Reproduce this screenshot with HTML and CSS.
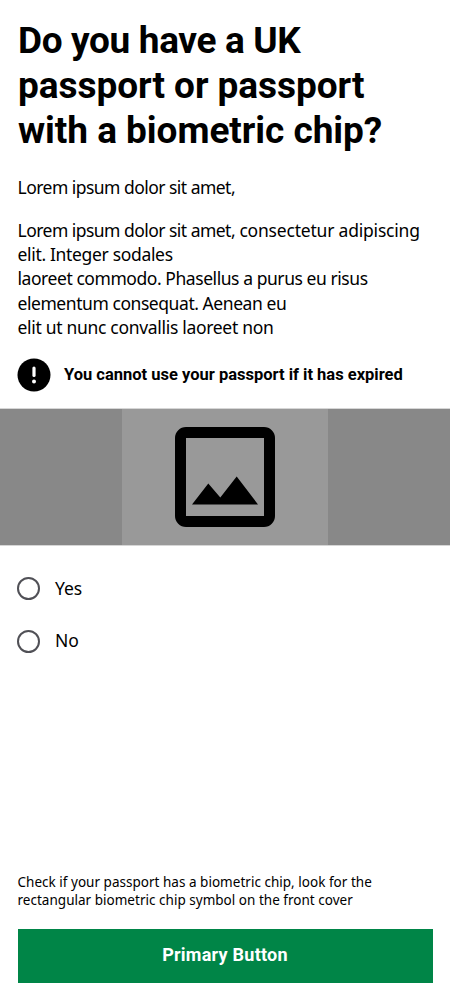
FILE: index.html
```html
<!DOCTYPE html>
<html lang="en">
<head>
<meta charset="utf-8">
<title>Do you have a UK passport?</title>
<link rel="stylesheet" href="styles.css">
</head>
<body>
<main class="screen">
  <h1 class="title"><span class="t1">Do you have a UK</span><br><span class="t2">passport or passport</span><br><span class="t2">with a biometric chip?</span></h1>
  <p class="body"><span class="b1">Lorem ipsum dolor sit amet,</span></p>
  <p class="body"><span class="b1">Lorem ipsum dolor sit amet,</span><span class="b2"> consectetur adipiscing</span><br><span class="b3">elit. Integer sodales</span><br><span class="b4">laoreet commodo. Phasellus a purus eu risus</span><br><span class="b4">elementum consequat. Aenean eu</span><br><span class="b6">elit ut nunc convallis laoreet non</span></p>
  <div class="warning">
    <svg class="warning-icon" viewBox="0 0 34 34"><circle cx="17" cy="17" r="16.5"/><path d="M17 10v7.5" stroke="#fff" stroke-width="3.2" stroke-linecap="round"/><circle cx="17" cy="23.6" r="2" fill="#fff"/></svg>
    <strong class="warning-text">You cannot use your passport if it has expired</strong>
  </div>
  <div class="media">
    <div class="media-inner">
      <svg class="picture" viewBox="0 0 100 100"><path fill-rule="evenodd" d="M11 0H89A11 11 0 0 1 100 11V89A11 11 0 0 1 89 100H11A11 11 0 0 1 0 89V11A11 11 0 0 1 11 0ZM11 11V89H89V11Z"/><path d="M17 77.5 33.3 56.5 45.3 70.5 61.7 49.5 83 77.5Z"/></svg>
    </div>
  </div>
  <div class="options">
    <label class="option"><input class="radio" type="radio" name="passport"><span class="option-text">Yes</span></label>
    <label class="option"><input class="radio" type="radio" name="passport"><span class="option-text">No</span></label>
  </div>
  <footer class="footer">
    <p class="hint">Check if your passport has a biometric chip, look for the<br>rectangular biometric chip symbol on the front cover</p>
    <button class="primary">Primary Button</button>
  </footer>
</main>
</body>
</html>
```
FILE: styles.css
```css
* { box-sizing: border-box; }
body { margin: 0; background: #fff; color: #000; font-family: "Noto Sans", sans-serif; }
.screen { display: flex; flex-direction: column; height: 1000px; padding-top: 18px; overflow: hidden; }
.title { margin: 0 0 22px; padding-left: 18px; font: bold 37px/45px Roboto, sans-serif; white-space: nowrap; }
.t1 { letter-spacing: -0.36px; }
.t2 { letter-spacing: -0.05px; }
.body { margin: 0 0 19px; padding-left: 17.5px; font-size: 17.5px; line-height: 24.15px; white-space: nowrap; }
.b1 { letter-spacing: -0.53px; }
.b2 { letter-spacing: -0.2px; }
.b3 { letter-spacing: -0.33px; }
.b4 { letter-spacing: -0.44px; }
.b6 { letter-spacing: -0.31px; }
.warning { display: flex; align-items: center; gap: 13px; height: 34px; padding-left: 17px; }
.warning-icon { width: 34px; height: 34px; }
.warning-text { font: bold 16.5px/24px Roboto, sans-serif; white-space: nowrap; }
.media { display: flex; justify-content: center; height: 138px; margin-top: 16px; background: #888; border: solid #d6d6d6; border-width: 1px 0; background-clip: padding-box; }
.media-inner { display: flex; justify-content: center; align-items: center; width: 206px; background: #999; }
.picture { width: 100px; height: 100px; }
.options { display: flex; flex-direction: column; gap: 28.5px; padding: 31px 0 0 17px; }
.option { display: flex; align-items: center; gap: 15px; height: 24px; font-size: 17.5px; line-height: 24px; }
.option-text { padding-bottom: 2px; letter-spacing: -0.1px; }
.radio { appearance: none; width: 23px; height: 23px; margin: 0; border: 2px solid #505056; border-radius: 50%; }
.footer { margin-top: auto; padding: 0 17.5px 17.5px; }
.hint { margin: 0 0 20px; font-size: 13.5px; line-height: 18px; letter-spacing: 0.02px; white-space: nowrap; }
.primary { display: block; width: 100%; height: 54px; padding: 0 0 2px; border: 0; background: #008547; color: #fff; font: bold 18px/24px Roboto, sans-serif; letter-spacing: 0.25px; }
```
